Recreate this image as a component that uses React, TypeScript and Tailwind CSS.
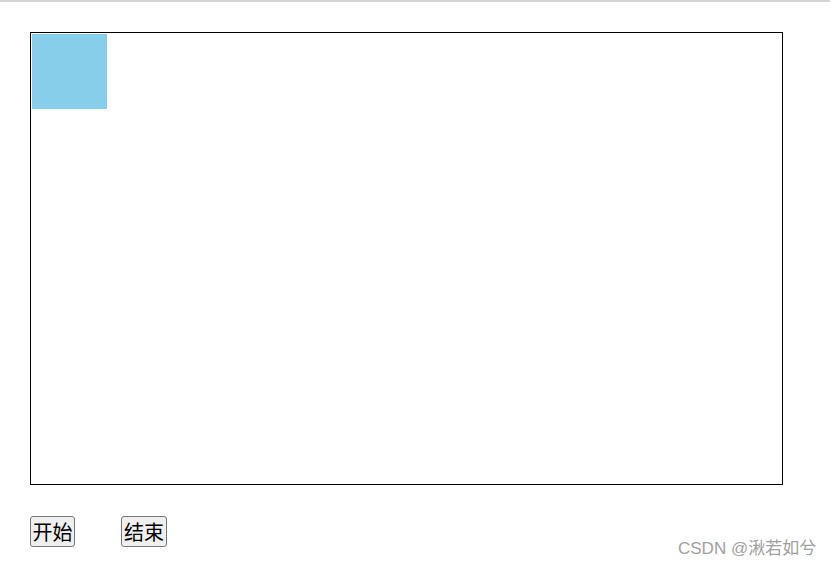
export default function App() {
  return (
    <div className="relative w-[830px] h-[568px] bg-white overflow-hidden" style={{ fontFamily: '"Liberation Sans", "Noto Sans CJK SC", sans-serif' }}>
      <div className="h-[2px] bg-[#d3d3d3]" />
      <div className="pl-[30px] pt-[30px]">
        <div className="w-[753px] h-[453px] border border-black p-px">
          <div className="w-[75px] h-[75px] bg-[#87ceeb]" />
        </div>
        <div className="flex gap-[46px] mt-[31px]">
          <button className="h-[31px] w-[45px] flex items-center justify-center border border-[#767676] rounded-[3px] bg-[#efefef] text-[20px] leading-none text-black" style={{ fontFamily: '"Noto Sans CJK SC", sans-serif' }}>开始</button>
          <button className="h-[31px] w-[46px] flex items-center justify-center border border-[#767676] rounded-[3px] bg-[#efefef] text-[20px] leading-none text-black" style={{ fontFamily: '"Noto Sans CJK SC", sans-serif' }}>结束</button>
        </div>
      </div>
      <div className="absolute left-[678px] top-[539px] text-[17px] leading-[20px] text-[#a0a0a0]">CSDN @湫若如兮</div>
    </div>
  );
}
